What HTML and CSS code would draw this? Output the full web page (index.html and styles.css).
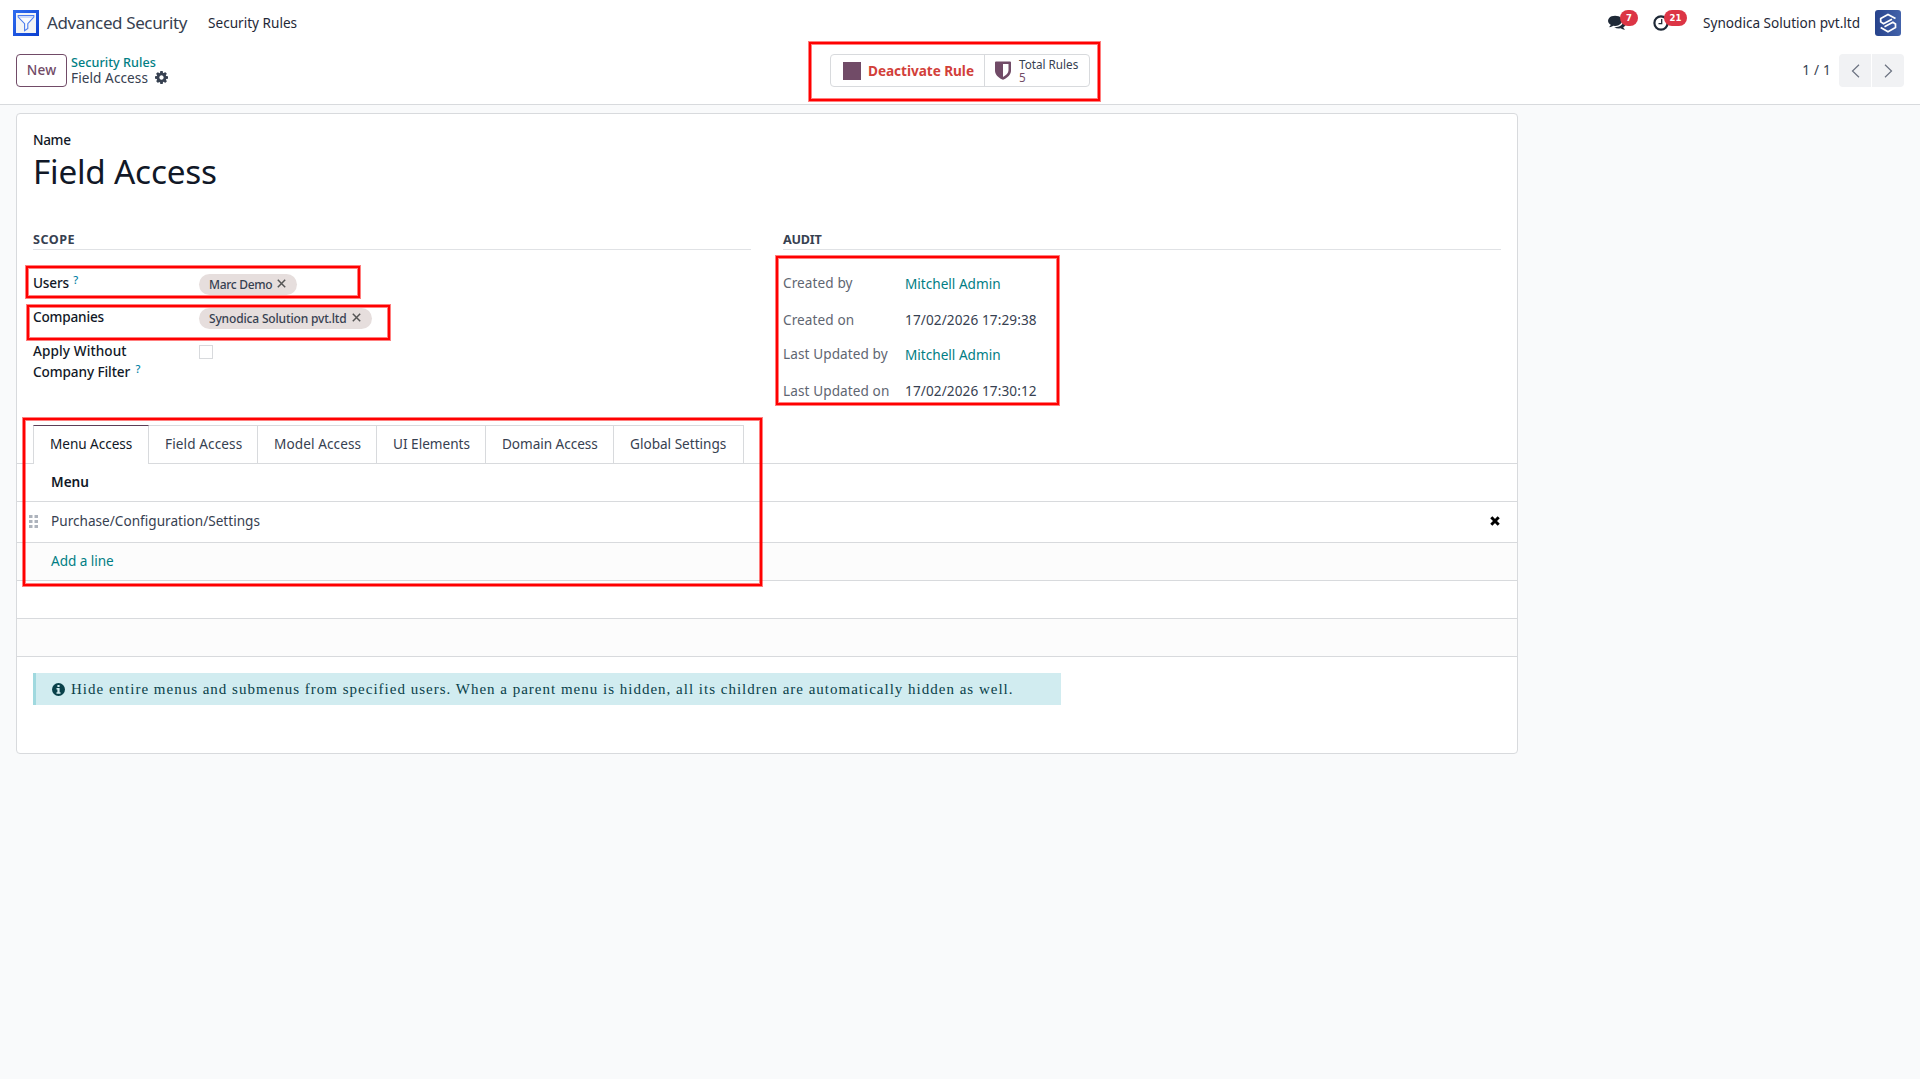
FILE: index.html
```html
<!DOCTYPE html>
<html lang="en">
<head>
<meta charset="utf-8">
<title>Field Access - Advanced Security</title>
<link rel="stylesheet" href="styles.css">
</head>
<body>
<header class="navbar">
  <svg class="app-icon" viewBox="0 0 26 26"><defs><linearGradient id="ag" x1="0" y1="0" x2="1" y2="1"><stop offset="0" stop-color="#2f6df0"/><stop offset="1" stop-color="#0c3fd0"/></linearGradient></defs><rect width="26" height="26" fill="url(#ag)"/><rect x="3" y="3" width="20" height="20" fill="#f3f4f6"/><path d="M5.200 5.500h15.600v1.600l-6 6.600v4.800l-3.200 2.300v-7.100l-6.400-6.600z" fill="#fafbfd" stroke="#4a7bee" stroke-width="1.100"/><path d="M5.500 7h15" stroke="#8fb0f5" stroke-width=".8"/></svg>
  <span class="app-name">Advanced Security</span>
  <a class="nav-link">Security Rules</a>
  <div class="systray">
    <div class="tray-item chat">
      <svg width="18" height="16" viewBox="0 0 1792 1600"><path fill="#1f2937" d="M1408 640q0 139-94 257t-256.500 186.500-353.500 68.500q-86 0-176-16-124 88-278 128-36 9-86 16h-3q-11 0-20.500-8t-11.500-21q-1-3-1-6.500t.5-6.500 2-6l2.500-5 3.500-5.500 4-5 4.500-5 4-4.500q5-6 23-25t26-29.500 22.500-29 25-38.500 20.500-44q-124-72-195-177t-71-224q0-139 94-257t256.500-186.500 353.500-68.500 353.500 68.500 256.500 186.500 94 257zm384 256q0 120-71 224.500t-195 176.500q10 24 20.500 44t25 38.500 22.500 29 26 29.500 23 25q1 1 4 4.500t4.500 5 4 5 3.500 5.500l2.500 5 2 6 .5 6.500-1 6.500q-3 14-13 22t-22 7q-50-7-86-16-154-40-278-128-90 16-176 16-271 0-472-132 58 4 88 4 161 0 309-45t264-129q125-92 192-212t67-254q0-77-23-152 129 71 204 178t75 230z" transform="translate(0,-60)"/></svg>
      <span class="badge">7</span>
    </div>
    <div class="tray-item clock">
      <svg width="16" height="16" viewBox="0 0 16 16" fill="none" stroke="#1f2937"><circle cx="8" cy="8" r="6.600" stroke-width="2.200"/><path d="M8.700 4v4.600H5.500" stroke-width="1.300"/></svg>
      <span class="badge wide">21</span>
    </div>
    <span class="company">Synodica Solution pvt.ltd</span>
    <svg class="avatar" viewBox="0 0 26 26"><defs><linearGradient id="av" x1="0" y1="0" x2="1" y2="0"><stop offset="0" stop-color="#27438c"/><stop offset="1" stop-color="#4363ab"/></linearGradient></defs><rect width="26" height="26" rx="3" fill="url(#av)"/><g fill="none" stroke="#fff" stroke-width="1.700"><path d="M20.500 8.600L13 4.400 5.700 8.500v3.400l2.800 1.800L17 9.300"/><path d="M5.700 17.500L13 21.700l7.500-4.100v-3.600l-2.600-1.700L9.500 16.700"/></g></svg>
  </div>
</header>

<section class="control-panel">
  <button class="btn-new">New</button>
  <div class="breadcrumb">
    <a class="crumb-parent">Security Rules</a>
    <div class="crumb-current"><span>Field Access</span>
      <svg width="13" height="13" viewBox="0 0 1536 1536"><path fill="#374151" d="M1024 768q0-106-75-181t-181-75-181 75-75 181 75 181 181 75 181-75 75-181zm512-109v222q0 12-8 23t-20 13l-185 28q-19 54-39 91 35 50 107 138 10 12 10 25t-9 23q-27 37-99 108t-94 71q-12 0-26-9l-138-108q-44 23-91 38-16 136-29 186-7 28-36 28H657q-14 0-24.500-8.500T621 1506l-28-184q-49-16-90-37l-141 107q-10 9-25 9-14 0-25-11-126-114-165-168-7-10-7-23 0-12 8-23 15-21 51-66.500t54-70.500q-27-50-41-99L29 913q-13-2-21-12.500T0 877V655q0-12 8-23t19-13l186-28q14-46 39-92-40-57-107-138-10-12-10-24 0-10 9-23 26-36 98.500-107.500T337 135q13 0 26 10l138 107q44-23 91-38 16-136 29-186 7-28 36-28h222q14 0 24.500 8.500T915 30l28 184q49 16 90 37l142-107q9-9 24-9 13 0 25 10 129 119 165 170 7 8 7 22 0 12-8 23-15 21-51 66.500t-54 70.500q26 50 41 98l183 28q13 2 21 12.500t8 23.500z"/></svg>
    </div>
  </div>
  <div class="stat-buttons">
    <div class="stat toggle"><i class="square"></i><b>Deactivate Rule</b></div>
    <div class="stat rules">
      <svg width="16" height="19" viewBox="0 0 16 19"><path fill="#714b67" fill-rule="evenodd" d="M0 1.500q0-1 1-1h14q1 0 1 1v8c0 4-3 6.800-7.300 9q-.7.300-1.400 0C3 16.300 0 13.500 0 9.500zM8 3v12.900c3.300-1.800 5.500-3.800 5.500-6.600V3z"/></svg>
      <div class="stat-text"><span>Total Rules</span><em>5</em></div>
    </div>
  </div>
  <div class="pager">
    <span>1 / 1</span>
    <div class="pager-buttons">
      <button class="prev"><svg width="9" height="14" viewBox="0 0 9 14"><path d="M8 .7L1.500 7 8 13.300"/></svg></button>
      <button class="next"><svg width="9" height="14" viewBox="0 0 9 14"><path d="M1 .7L7.500 7 1 13.300"/></svg></button>
    </div>
  </div>
</section>

<main class="sheet">
  <div class="title-block">
    <label class="name-label">Name</label>
    <h1>Field Access</h1>
  </div>
  <div class="groups">
    <section class="group scope">
      <h2>SCOPE</h2>
      <div class="row"><label>Users <sup>?</sup></label><span class="tag user-tag">Marc Demo <svg width="9" height="9" viewBox="0 0 9 9"><path d="M.8.8l7.400 7.400M8.200.8L.8 8.200"/></svg></span></div>
      <div class="row"><label>Companies</label><span class="tag company-tag">Synodica Solution pvt.ltd <svg width="9" height="9" viewBox="0 0 9 9"><path d="M.8.8l7.400 7.400M8.200.8L.8 8.200"/></svg></span></div>
      <div class="row"><label class="two-line"><span class="apply">Apply Without</span><br>Company Filter <sup>?</sup></label><span class="checkbox"></span></div>
    </section>
    <section class="group audit">
      <h2>AUDIT</h2>
      <div class="row link-row"><label>Created by</label><a>Mitchell Admin</a></div>
      <div class="row date-row"><label>Created on</label><span>17/02/2026 17:29:38</span></div>
      <div class="row link-row"><label>Last Updated by</label><a>Mitchell Admin</a></div>
      <div class="row date-row"><label>Last Updated on</label><span>17/02/2026 17:30:12</span></div>
    </section>
  </div>
  <nav class="tabs">
    <a class="tab active">Menu Access</a>
    <a class="tab field">Field Access</a>
    <a class="tab model">Model Access</a>
    <a class="tab ui">UI Elements</a>
    <a class="tab domain">Domain Access</a>
    <a class="tab global">Global Settings</a>
  </nav>
  <div class="list">
    <div class="line head">Menu</div>
    <div class="line record"><svg class="handle" width="9" height="13" viewBox="0 0 9 13"><path fill="#adb3bc" d="M0 0h3.500v3H0zM5.500 0H9v3H5.500zM0 5h3.500v3H0zM5.500 5H9v3H5.500zM0 10h3.500v3H0zM5.500 10H9v3H5.500z"/></svg><span>Purchase/Configuration/Settings</span><svg class="remove" width="10" height="10" viewBox="0 0 10 10"><path d="M1.300 1.300l7.400 7.400M8.700 1.300L1.300 8.700" stroke="#000" stroke-width="3"/></svg></div>
    <div class="line add"><a>Add a line</a></div>
    <div class="line"></div>
    <div class="line striped"></div>
  </div>
  <div class="alert">
    <svg width="13" height="13" viewBox="0 0 13 13"><circle cx="6.500" cy="6.500" r="6.500" fill="#09414a"/><path fill="#d1ecf0" d="M5.400 2h2.200v1.900H5.400zM4.500 5h3.100v4.300h.9v1.500h-4V9.300h.9V6.500h-.9z"/></svg>
    <span>Hide entire menus and submenus from specified users. When a parent menu is hidden, all its children are automatically hidden as well.</span>
  </div>
</main>

<div class="mark mark-buttons"></div>
<div class="mark mark-users"></div>
<div class="mark mark-companies"></div>
<div class="mark mark-audit"></div>
<div class="mark mark-tabs"></div>
</body>
</html>
```
FILE: styles.css
```css
* { box-sizing: border-box; }
body {
  margin: 0;
  min-height: 1079px;
  background: #f9fafb;
  color: #374151;
  font: 13.6px/21px "Noto Sans", "Open Sans", sans-serif;
  position: relative;
  overflow: hidden;
  white-space: nowrap;
}
svg { display: block; flex: none; }
button { font: inherit; padding: 0; border: 0; }
a { color: #017e84; }

/* top bar */
.navbar { height: 46px; padding: 0 19px 0 13px; background: #fff; display: flex; align-items: center; }
.app-icon { width: 26px; height: 26px; }
.app-name { margin-left: 8px; width: 161px; padding-bottom: 2px; font-size: 17px; letter-spacing: -.38px; }
.nav-link { color: #1f2937; padding-bottom: 2px; }
.systray { margin-left: auto; display: flex; align-items: center; color: #1f2937; }
.tray-item { position: relative; }
.chat { width: 18px; margin-right: 27px; }
.clock { width: 16px; margin-right: 34px; }
.clock svg { margin-top: -1px; }
.badge {
  position: absolute; left: 12px; top: -5px; width: 18px; height: 16px; border-radius: 8px;
  background: #dc3545; color: #fff; font: 700 8.500px/16px "DejaVu Sans", sans-serif; text-align: center;
}
.badge.wide { width: 23px; left: 11px; top: -6px; }
.company { width: 172px; padding-bottom: 2px; }
.avatar { width: 26px; height: 26px; }

/* control panel */
.control-panel {
  height: 59px; padding: 8px 16px 0; background: #fff; border-bottom: 1px solid #d8dadd;
  display: grid; grid-template-columns: 51px 763px 260px 1fr; align-items: start;
}
.btn-new { height: 33px; border: 1px solid #714b67; border-radius: 4px; background: #fff; color: #714b67; font-weight: 500; letter-spacing: .2px; padding-bottom: 2px; }
.breadcrumb { padding: 1px 0 0 4px; }
.crumb-parent { display: block; font-size: 12.600px; line-height: 15px; font-weight: 500; letter-spacing: .04px; }
.crumb-current { display: flex; align-items: center; gap: 7px; line-height: 15px; letter-spacing: .08px; }
.stat-buttons { display: flex; height: 33px; border: 1px solid #d8dadd; border-radius: 4px; }
.stat { display: flex; align-items: center; }
.toggle { width: 154px; padding-left: 12px; gap: 7px; border-right: 1px solid #d8dadd; color: #d23f3a; letter-spacing: -.04px; }
.square { width: 18px; height: 18px; background: #714b67; }
.rules { padding-left: 10px; gap: 8px; font-size: 11.700px; line-height: 13px; }
.stat-text { display: flex; flex-direction: column; }
.stat-text em { font-style: normal; color: #714b67; }
.pager { justify-self: end; display: flex; align-items: center; gap: 8px; letter-spacing: .2px; }
.pager > span { padding-bottom: 2px; }
.pager-buttons { display: flex; gap: 1px; }
.pager-buttons button { width: 32px; height: 33px; background: #f1f2f4; display: grid; place-items: center; }
.pager-buttons path { fill: none; stroke: #6b7280; stroke-width: 1.200; }
.prev { border-radius: 4px 0 0 4px; }
.next { border-radius: 0 4px 4px 0; }

/* form sheet */
.sheet { margin: 8px 0 0 16px; width: 1502px; height: 641px; background: #fff; border: 1px solid #d8dadd; border-radius: 4px; }
.title-block { height: 116px; padding: 15px 16px 0; color: #111827; }
.name-label { display: block; font-weight: 500; letter-spacing: -.35px; }
h1 { margin: -1px 0 0; font-size: 33.300px; line-height: 44px; font-weight: 400; letter-spacing: -.22px; }
.groups { display: grid; grid-template-columns: 718px 718px; gap: 32px; padding: 0 16px; height: 195px; }
h2 { margin: 0 0 21px; height: 20px; border-bottom: 1px solid #e0e2e5; font-size: 12.600px; line-height: 19px; font-weight: 700; }
.scope h2 { letter-spacing: .5px; }
.audit h2 { letter-spacing: -.2px; }
.row { display: grid; align-items: start; }
.scope .row { grid-template-columns: 166px max-content; height: 34px; padding-top: 1px; color: #111827; font-weight: 500; }
.scope label { letter-spacing: -.18px; }
.scope .apply { letter-spacing: .1px; }
.scope .two-line { letter-spacing: -.1px; }
sup { margin-left: 1px; font-size: 11px; line-height: 0; vertical-align: 4px; color: #0180a5; }
.two-line sup { margin-left: 2px; }
.tag { margin-top: 2px; height: 21px; padding: 0 11px 0 10px; border-radius: 11px; background: #e6dedd; color: #374151; font-size: 12px; line-height: 19px; display: flex; align-items: center; gap: 5px; }
.tag svg { margin-top: -2px; }
.user-tag { letter-spacing: -.3px; }
.company-tag { letter-spacing: -.16px; }
.tag svg path { stroke: #555; stroke-width: 1.500; }
.checkbox { margin-top: 5px; width: 14px; height: 14px; border: 1px solid #d8dadd; background: #fff; }
.audit .row { grid-template-columns: 122px max-content; }
.audit label { color: #5f6672; letter-spacing: .09px; }
.link-row { height: 36px; padding-top: 1px; }
.link-row a { padding-top: 1px; }
.date-row { height: 35px; padding-top: 2px; }
.date-row span { letter-spacing: .1px; }

/* notebook */
.tabs { height: 39px; padding-left: 16px; display: flex; border-bottom: 1px solid #d8dadd; }
.tab { height: 38px; border: solid #d8dadd; border-width: 1px 1px 0 0; color: #374151; line-height: 35px; padding-left: 16px; }
.tab.active { width: 116px; height: 39px; background: #fff; border-left-width: 1px; border-top-color: #5b4057; color: #111827; letter-spacing: -.05px; }
.field { width: 109px; letter-spacing: .1px; }
.model { width: 119px; letter-spacing: .09px; }
.ui { width: 109px; }
.domain { width: 128px; letter-spacing: -.05px; }
.global { width: 130px; }
.line { height: 38px; padding: 0 16px 0 34px; border-bottom: 1px solid #d8dadd; line-height: 35px; }
.head { color: #111827; font-weight: 600; }
.record { height: 41px; padding-left: 12px; display: flex; align-items: center; }
.record .handle { margin-top: -1px; }
.record span { margin-left: 13px; padding-bottom: 4px; letter-spacing: .01px; }
.remove { margin: -2px 1px 0 auto; }
.add, .striped { background: #fcfcfc; }
.add a { letter-spacing: -.05px; }
.alert {
  margin: 16px 0 0 16px; width: 1028px; height: 32px; padding-left: 16px; border-left: 3px solid #a0d9df;
  background: #d1ecf0; color: #09414a; display: flex; align-items: center; gap: 6px;
  font: 15px/32px "Liberation Serif", serif; letter-spacing: 1px;
}

/* highlight frames drawn over the page */
.mark { position: absolute; border: 2px solid #f00; box-shadow: 0 0 0 1px rgba(255,0,0,.5), inset 0 0 0 1px rgba(255,0,0,.5); }
.mark-buttons { left: 809px; top: 42px; width: 291px; height: 59px; }
.mark-users { left: 26px; top: 266px; width: 334px; height: 32px; }
.mark-companies { left: 27px; top: 305px; width: 363px; height: 35px; }
.mark-audit { left: 776px; top: 256px; width: 283px; height: 149px; }
.mark-tabs { left: 23px; top: 418px; width: 739px; height: 168px; }
```
